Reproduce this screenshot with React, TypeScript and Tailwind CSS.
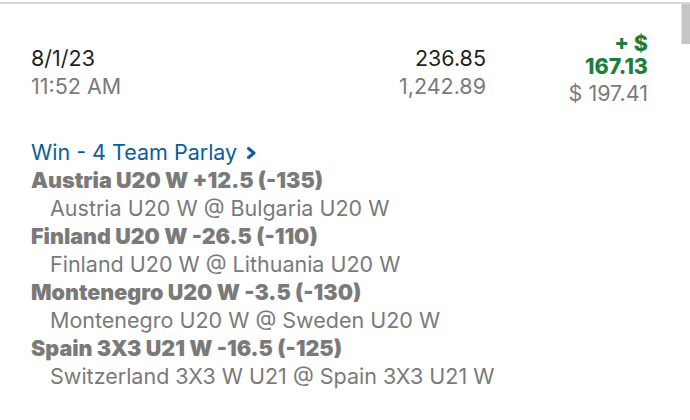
const legs = [
    { pick: 'Austria U20 W +12.5 (-135)', game: 'Austria U20 W @ Bulgaria U20 W' },
    { pick: 'Finland U20 W -26.5 (-110)', game: 'Finland U20 W @ Lithuania U20 W' },
    { pick: 'Montenegro U20 W -3.5 (-130)', game: 'Montenegro U20 W @ Sweden U20 W' },
    { pick: 'Spain 3X3 U21 W -16.5 (-125)', game: 'Switzerland 3X3 W U21 @ Spain 3X3 U21 W' },
];

export default function App() {
    return (
        <div className="relative w-[690px] h-[420px] overflow-hidden bg-white font-['Inter',sans-serif] text-[21.5px]">
            <div className="h-[4px] border-b-2 border-[#d8d8d8]" />
            <div className="absolute right-0 top-[4px] w-[9px] h-[40px] bg-[#c6c6c6] border-l border-[#dedede]" />

            <div className="flex items-start pl-[31px] pt-[28px] pr-[42px]">
                <div className="flex-1 flex flex-col pt-[12px]">
                    <span className="leading-[28px] text-[#1f1f1f]">8/1/23</span>
                    <span className="leading-[28px] text-[#7a7a7a]">11:52 AM</span>
                </div>
                <div className="flex flex-col items-end pt-[12px]">
                    <span className="leading-[28px] text-[#1f1f1f]">236.85</span>
                    <span className="leading-[28px] text-[#7a7a7a]">1,242.89</span>
                </div>
                <div className="w-[162px] flex flex-col items-end">
                    <span className="leading-[23px] font-extrabold text-[#1e7e3e]">+ $</span>
                    <span className="leading-[23px] font-extrabold text-[#1e7e3e]">167.13</span>
                    <span className="leading-[30px] text-[#7a7a7a]">$ 197.41</span>
                </div>
            </div>

            <div className="flex flex-col pl-[31px] pt-[30px]">
                <div className="flex items-center gap-[9px] leading-[28px] text-[#0b5e9c]">
                    <span>Win - 4 Team Parlay</span>
                    <svg width="11" height="12" viewBox="0 0 11 12" fill="none" className="mt-[2px]">
                        <path d="M2.5 1.5 L8 6 L2.5 10.5" stroke="currentColor" strokeWidth="3" strokeLinecap="round" strokeLinejoin="round" />
                    </svg>
                </div>
                {legs.map((leg) => (
                    <div key={leg.pick} className="flex flex-col">
                        <span className="leading-[28px] font-black text-[#7a7a7a]">{leg.pick}</span>
                        <span className="pl-[19px] leading-[28px] text-[#7a7a7a]">{leg.game}</span>
                    </div>
                ))}
            </div>
        </div>
    );
}
